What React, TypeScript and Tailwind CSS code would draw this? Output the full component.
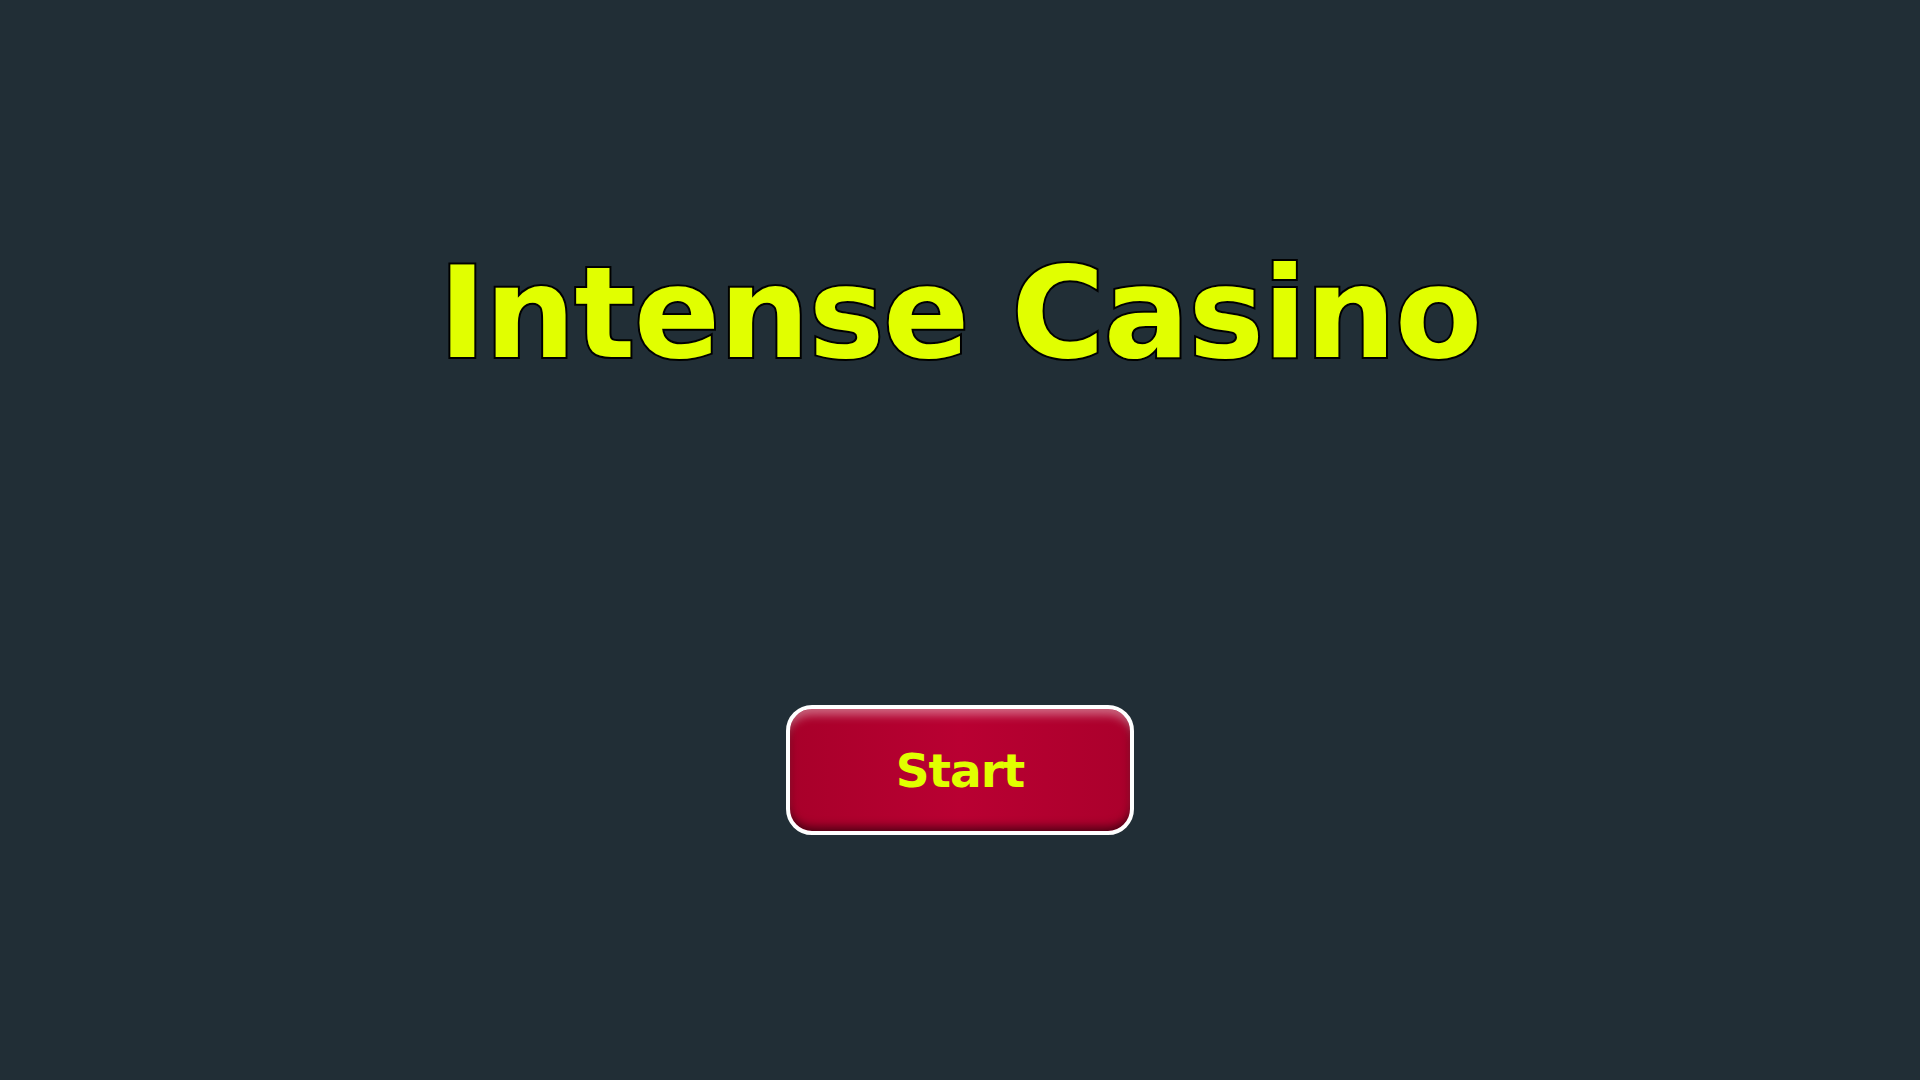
export default function App() {
  return (
    <div className="flex min-h-screen w-full flex-col items-center bg-[#212e36] [font-family:'DejaVu_Sans',sans-serif]">
      <h1 className="mt-[250px] text-[127px] font-bold leading-none tracking-[-1px] text-[#e1ff00] [-webkit-text-stroke:4px_#000] [paint-order:stroke_fill]">
        Intense Casino
      </h1>
      <button
        type="button"
        className="mt-[328px] flex h-[130px] w-[348px] items-center justify-center rounded-[26px] border-4 border-white bg-[linear-gradient(90deg,#a8002a,#b90032_50%,#ab002c)] shadow-[inset_0_12px_10px_-6px_rgba(255,255,255,0.4),inset_0_-10px_10px_-6px_rgba(0,0,0,0.55),inset_8px_0_10px_-8px_rgba(0,0,0,0.25),inset_-8px_0_10px_-8px_rgba(0,0,0,0.25)]"
      >
        <span className="text-[47px] font-bold leading-none tracking-[-1px] text-[#e1ff00]">Start</span>
      </button>
    </div>
  );
}
